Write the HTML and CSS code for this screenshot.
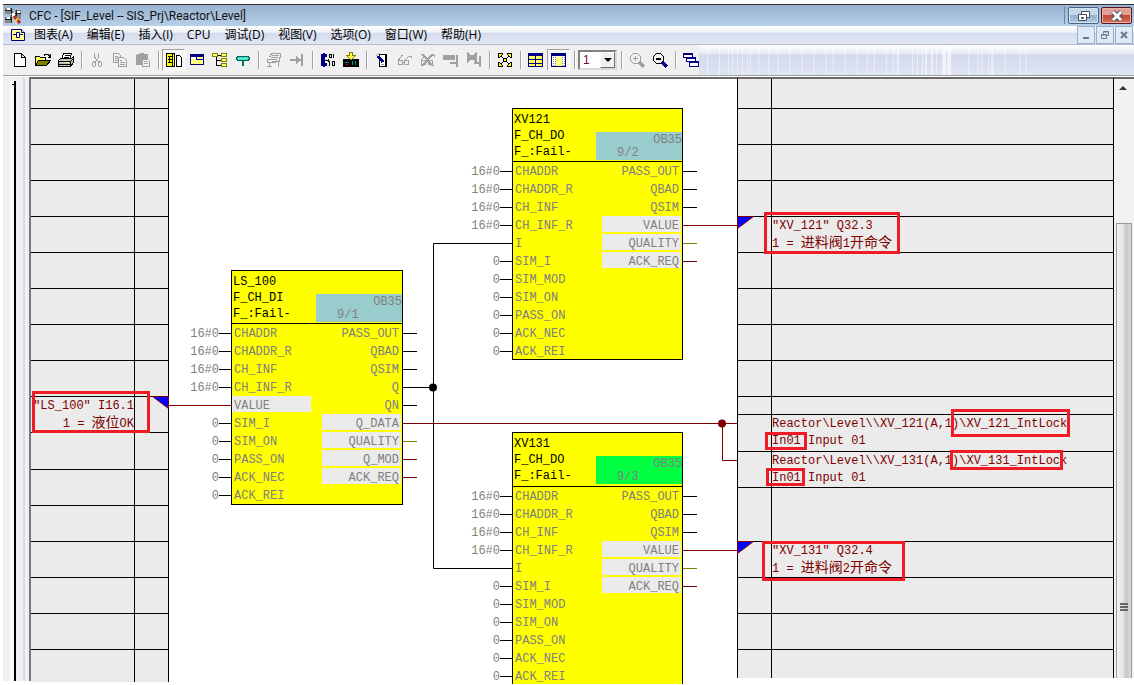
FILE: index.html
```html
<!DOCTYPE html>
<html lang="zh-CN">
<head>
<meta charset="utf-8">
<title>CFC - [SIF_Level -- SIS_Prj\Reactor\Level]</title>
<link rel="stylesheet" href="styles.css">
</head>
<body>
<div class="window">
  <header class="titlebar">
    <svg class="ico" width="18" height="16" viewBox="0 0 18 16"><path fill="#888" d="M0 0h7v6H0zM0 9h7v6H0zM10 2h6v9h-6z"/><path stroke="#222" fill="none" d="M0 2.500h7v3h9M0 11.500h6v-4h5M6.500 0v6M6.500 9v6M11.500 2v6"/><path fill="#fff" d="M2 0h3v2H2zM2 9h3v2H2zM12 3h3v2h-3zM7 5h3v3H7z"/><path stroke="#c22b18" stroke-width="3" d="M9 8l6 7"/><path stroke="#ffd22e" stroke-width="2" d="M13 10l-3 4"/></svg>
    <h1>CFC - [SIF_Level -- SIS_Prj\Reactor\Level]</h1>
    <div class="winbtns">
      <button class="wb" aria-label="还原"><svg width="14" height="12" viewBox="0 0 14 12"><path fill="#fff" stroke="#454c60" d="M4.500 1.500h8v6h-8z"/><path fill="#8fb0d4" stroke="#454c60" d="M7.500 4.500h2v1h-2z"/><path fill="#fff" stroke="#454c60" d="M1.500 4.500h8v6h-8z"/><path fill="#8fb0d4" stroke="#454c60" d="M4.500 7.500h2v1h-2z"/></svg></button>
      <button class="wb close" aria-label="关闭"><svg width="14" height="12" viewBox="0 0 14 12"><path stroke="#454c60" stroke-width="5" d="M3 2l8 8M11 2l-8 8"/><path stroke="#fff" stroke-width="3" d="M3 2l8 8M11 2l-8 8"/></svg></button>
    </div>
  </header>
  <nav class="menubar">
    <svg class="ico" width="14" height="12" viewBox="0 0 14 12"><path fill="#ffff90" stroke="#000080" d="M.5.500h10l3 3v8H.5z"/><path fill="#fff" stroke="#000080" d="M10.500.500v3h3M5.500 3.500h3v5h-3zM2 5.500h3M9 5.500h3"/></svg>
    <button>图表(A)</button><button>编辑(E)</button><button>插入(I)</button><button>CPU</button><button>调试(D)</button><button>视图(V)</button><button>选项(O)</button><button>窗口(W)</button><button>帮助(H)</button>
    <div class="mdibtns">
      <button aria-label="最小化"><svg width="10" height="10" viewBox="0 0 10 10"><path fill="#6b7b8e" d="M2 7h6v2H2z"/></svg></button>
      <button aria-label="还原子窗口"><svg width="10" height="10" viewBox="0 0 10 10"><path fill="none" stroke="#6b7b8e" d="M3.500 3.500v-2h5v4h-2M3 2h6M1.500 4.500h5v4h-5zM1 5h6"/></svg></button>
      <button aria-label="关闭子窗口"><svg width="10" height="10" viewBox="0 0 10 10"><path stroke="#6b7b8e" stroke-width="2" d="M2 2l6 6M8 2l-6 6"/></svg></button>
    </div>
  </nav>
  <div class="toolbar">
    <div class="tools">
      <button aria-label="新建"><svg viewBox="0 0 16 16"><path fill="#fff" stroke="#000" d="M2.500 1.500h7l4 4v9h-11zM9.500 1.500v4h4"/></svg></button>
      <button aria-label="打开"><svg viewBox="0 0 16 16"><path fill="#ffff60" stroke="#000" d="M.5 13.500v-9h4l1 1h5v3"/><path fill="#808000" stroke="#000" d="M.5 13.500l3-5h12l-4 5z"/><path fill="none" stroke="#000" d="M9 3.500l1-1h3l2 2M15.500 2v3h-3"/></svg></button>
      <button aria-label="打印"><svg viewBox="0 0 16 16"><path fill="#fff" stroke="#000" d="M3.500 7.500l2-6h8l-2 6zM6.500 3.500h5M5.500 5.500h5"/><path fill="#c0c0c0" stroke="#000" d="M.5 8.500l2-2h11l2-2v6l-3 4H.5z"/><path stroke="#000" fill="none" d="M.5 9.500h12l3-3M.5 12.500h12v2M12.500 9v4"/><path fill="#ff0" d="M8 10h3v1H8z"/></svg></button>
      <i class="sep"></i>
      <button aria-label="剪切"><svg viewBox="0 0 16 16" fill="none" stroke="#a0a0a0"><path d="M5.500 1v4l5 6M9.500 1v4l-4 6M4.500 9.500h1l1 1v3l-1 1h-1l-1-1v-3zM10.500 9.500h1l1 1v3l-1 1h-1l-1-1v-2z"/></svg></button>
      <button aria-label="复制"><svg viewBox="0 0 16 16" fill="#f0f0f0" stroke="#a0a0a0"><path d="M1.500 1.500h5l2 2v7h-7zM3 4.500h3M3 6.500h3M3 8.500h3"/><path d="M6.500 5.500h5l3 3v6h-8zM8 8.500h2M8 10.500h5M8 12.500h5"/></svg></button>
      <button aria-label="粘贴"><svg viewBox="0 0 16 16" fill="#a0a0a0"><path d="M1 3l1-1h3V1h4v1h3l1 1v10H1z"/><path fill="#f0f0f0" stroke="#a0a0a0" d="M7.500 7.500h5l2 2v5h-7zM9 9.500h3M9 11.500h4M4 4.500h6"/></svg></button>
      <i class="sep"></i>
      <button class="on" aria-label="目录"><svg viewBox="0 0 16 16"><path fill="#ff0" stroke="#000" d="M.5 1.500h8v13h-8z"/><path fill="#fff" stroke="#000" d="M10.500 3.500h3l2 2v9h-5z"/><path stroke="#000" fill="none" d="M6.500 2v12M2 4.500h4M2 7.500h4M3.500 4v7M2 10.500h4M8.500 2v12"/></svg></button>
      <button aria-label="图表窗口"><svg viewBox="0 0 16 16"><path fill="#ffff80" stroke="#000080" d="M1.500 2.500h13v10h-13z"/><path fill="#000080" d="M1 2h14v3H1z"/><path fill="#fff" d="M2 5h5v2H2z"/><path stroke="#000080" d="M7.500 5v2M7 7.500h8"/></svg></button>
      <button aria-label="层次"><svg viewBox="0 0 16 16" fill="#ffff60" stroke="#808000"><path fill="none" stroke="#000" d="M4.500 3v10h6M4.500 8h6M4 3.500h6"/><path d="M.5 1.500h5v3h-5zM9.500 1.500h5v3h-5zM9.500 6.500h5v3h-5zM9.500 11.500h5v3h-5z"/></svg></button>
      <button aria-label="运行顺序"><svg viewBox="0 0 16 16"><path fill="#40e0c0" stroke="#006060" d="M3.500 4.500h9l2 1v2l-2 1h-9l-2-1v-2z"/><path stroke="#008040" stroke-width="2" d="M8 9v5"/><path stroke="#80f0b0" stroke-dasharray="1 1" d="M3 6.500h10"/></svg></button>
      <i class="sep"></i>
      <button aria-label="跳转打印"><svg viewBox="0 0 16 16" fill="none" stroke="#a0a0a0"><path d="M3.500 5.500l2-4h9l-1 8h-8M6 3.500h7M5 5.500h7M1.500 7.500h9l-1 3h-8zM3.500 11v3M1 14.500h5M12.500 10v5"/></svg></button>
      <button aria-label="转到"><svg viewBox="0 0 16 16" fill="#a0a0a0"><path d="M1 7h6V4l4 3h1v2h-1l-4 3V9H1zM12 2h2v12h-2z"/></svg></button>
      <i class="sep"></i>
      <button aria-label="编译"><svg viewBox="0 0 16 16" fill="none" stroke="#000080"><path stroke-width="2" d="M6 5V3H2v10h4v-2M4 1v14"/><path stroke="#000" d="M5 8.500h4M8.500 7v3M9.500 2.500h2v3h-2zM13.500 2v4M9.500 9v5M12.500 9.500h2v4h-2z"/></svg></button>
      <button aria-label="下载"><svg viewBox="0 0 16 16"><path d="M0 7h16v8H0z"/><path fill="#ffff40" stroke="#808000" d="M6.500.500h3v3h3L8 8 3.500 3.500h3z"/><path stroke="#00a080" d="M2 10.500h4M9.500 9v4M12.500 9v4"/><path stroke="#d00" d="M3 12.500h2"/></svg></button>
      <i class="sep"></i>
      <button aria-label="测试模式"><svg viewBox="0 0 16 16"><path fill="#fff" stroke="#000" d="M5.500 2.500h6v12h-6z"/><path fill="#000" d="M11 2h2v13h-2z"/><path stroke="#000080" stroke-width="3" d="M4 4l5 6"/><path stroke="#999" d="M2 4l3-3M7 12.500h3"/></svg></button>
      <button aria-label="监视"><svg viewBox="0 0 16 16" fill="none" stroke="#a0a0a0"><path d="M1.500 8.500h4v4h-4zM7.500 8.500h4v4h-4zM1.500 8l4-5M8 8l4-4h2l1 2M5.500 10.500h2"/></svg></button>
      <button aria-label="取消监视"><svg viewBox="0 0 16 16" fill="none" stroke="#a0a0a0"><path d="M1.500 8.500h4v4h-4zM8.500 8.500h4v4h-4zM1 8l4-4M8 7l4-4h2l1 2"/><path stroke-width="2" d="M2 2l11 12M13 2L2 14"/></svg></button>
      <button aria-label="启用块"><svg viewBox="0 0 16 16" fill="#a0a0a0"><path d="M0 3h12v5H0zM13 3h2v12h-2zM7 10h6v2H7z"/></svg></button>
      <button aria-label="停用块"><svg viewBox="0 0 16 16" fill="#a0a0a0"><path d="M1 3h10v5H1zM13 4h2v11h-2zM8 10h5v2H8z"/><path stroke="#a0a0a0" stroke-width="2" d="M1 1l10 9M11 1L1 10"/></svg></button>
      <i class="sep"></i>
      <button aria-label="适合窗口"><svg viewBox="0 0 16 16"><path stroke="#000" fill="none" d="M3 3l10 10M13 3L3 13"/><path fill="#ff0" stroke="#000" d="M1.500 5.500v-4h4l-1 3zM10.500 1.500h4v4l-3-1zM1.500 10.500v4h4l-1-3zM14.500 10.500v4h-4l1-3zM6.500 6.500h3v3h-3z"/></svg></button>
      <i class="sep"></i>
      <button aria-label="总览"><svg viewBox="0 0 16 16"><path fill="#ffff60" stroke="#000080" d="M.5 1.500h14v13H.5z"/><path fill="#000080" d="M0 1h15v3H0z"/><path stroke="#000080" d="M7.500 4v11M1 7.500h13M1 11.500h13"/></svg></button>
      <button class="on" aria-label="图纸"><svg viewBox="0 0 16 16"><path fill="#fff" stroke="#000080" d="M.5 1.500h14v13H.5z"/><path fill="#000080" d="M0 1h15v3H0z"/><path fill="#ffff80" d="M5 5h6v9H5z"/><path stroke="#808080" stroke-dasharray="1 1" d="M2.500 5v9M4.500 5v9M11.500 5v9M13.500 5v9"/></svg></button>
      <i class="sep"></i>
      <label class="page"><select aria-label="图纸编号"><option>1</option></select><span></span></label>
      <i class="sep"></i>
      <button aria-label="放大"><svg viewBox="0 0 16 16" fill="none" stroke="#a0a0a0"><path d="M4.500 1.500h4l3 3v4l-3 3h-4l-3-3v-4zM4 6.500h5M6.500 4v5"/><path stroke-width="3" d="M10 10l5 5"/></svg></button>
      <button aria-label="缩小"><svg viewBox="0 0 16 16" fill="none" stroke="#000"><path d="M4.500 1.500h4l3 3v4l-3 3h-4l-3-3v-4z"/><path stroke-width="2" d="M4 7h5"/><path stroke="#000080" stroke-width="3" d="M10 10l5 5"/></svg></button>
      <i class="sep"></i>
      <button class="cut" aria-label="层叠"><svg viewBox="0 0 16 16" fill="#fff" stroke="#000080"><path d="M.5 1.500h9v4h-9zM3.500 5.500h9v4h-9zM6.500 9.500h9v5h-9z"/><path stroke-width="2" d="M0 2h10M3 6h10M6 10h10"/></svg></button>
    </div>
    <svg class="streaks" viewBox="0 0 433 30" preserveAspectRatio="none"><path stroke="#fff" stroke-opacity=".5" d="M8.500 0v30M20.500 0v30M29.500 0v30M33.500 0v30M38.500 0v30M43.500 0v30M48.500 0v30M51.500 0v30M59.500 0v30M69.500 0v30M78.500 0v30M90.500 0v30M102.500 0v30M114.500 0v30M126.500 0v30M133.500 0v30M145.500 0v30M157.500 0v30M167.500 0v30M174.500 0v30M186.500 0v30M193.500 0v30M212.500 0v30M217.500 0v30M222.500 0v30M236.500 0v30M268.500 0v30M277.500 0v30M281.500 0v30M288.500 0v30M304.500 0v30M319.500 0v30M325.500 0v30"/><path stroke="#fff" stroke-opacity=".5" stroke-width="2" d="M198 0v30M226 0v30M232 0v30M292 0v30"/><path stroke="#fff" stroke-opacity=".6" stroke-width="4" d="M244 0v30M249 0v30"/></svg>
  </div>

  <main class="work">
    <div class="gutter"><i class="rail"></i><i class="blue"></i></div>
    <section class="sheet left">
      <div class="row first"><p></p></div><div class="row"><p></p></div><div class="row"><p></p></div><div class="row"><p></p></div><div class="row"><p></p></div><div class="row"><p></p></div><div class="row"><p></p></div><div class="row"><p></p></div><div class="row"><p></p></div>
      <div class="row"><p>"LS_100" I16.1<br>1 = <span class="zh">液位</span>OK</p><svg class="flag" width="17" height="13" viewBox="0 0 17 13"><path fill="#00f" stroke="#800000" d="M.5.500h16v12z"/></svg><i class="mark ls"></i></div>
      <div class="row tall"><p></p></div><div class="row"><p></p></div><div class="row"><p></p></div><div class="row"><p></p></div><div class="row"><p></p></div><div class="row"><p></p></div><div class="row last"><p></p></div>
    </section>

    <section class="chart">
      <svg class="wires" width="568" height="606" viewBox="169 79 568 606" fill="none">
        <path stroke="#000" d="M417 387.500h16M512 243.500h-78.500v325H512"/>
        <path stroke="#800000" d="M169 405.500h62M417 423.500h320M722.500 424v36.500H737M697 225.500h40M697 550.500h40"/>
        <circle cx="433" cy="387.500" r="4" fill="#000"/><circle cx="722" cy="423.500" r="4" fill="#800000"/>
      </svg>
      <article class="node ls100">
        <ul class="vals"><li>16#0</li><li>16#0</li><li>16#0</li><li>16#0</li><li class="none"></li><li>0</li><li>0</li><li>0</li><li>0</li><li>0</li></ul>
        <div class="box">
          <header><h2>LS_100<br>F_CH_DI<br>F_:Fail-</h2><div class="task"><span>OB35</span><span class="pos">9/1</span></div></header>
          <div class="io">
            <ul><li>CHADDR</li><li>CHADDR_R</li><li>CH_INF</li><li>CH_INF_R</li><li class="st">VALUE</li><li>SIM_I</li><li>SIM_ON</li><li>PASS_ON</li><li>ACK_NEC</li><li>ACK_REI</li></ul>
            <ul class="out"><li>PASS_OUT</li><li>QBAD</li><li>QSIM</li><li>Q</li><li>QN</li><li class="st">Q_DATA</li><li class="st">QUALITY</li><li class="st">Q_MOD</li><li class="st">ACK_REQ</li></ul>
          </div>
        </div>
        <ul class="pins"><li></li><li></li><li></li><li></li><li></li><li class="red"></li><li class="olive"></li><li class="red"></li><li class="red"></li></ul>
      </article>
      <article class="node xv121">
        <ul class="vals"><li>16#0</li><li>16#0</li><li>16#0</li><li>16#0</li><li class="none"></li><li>0</li><li>0</li><li>0</li><li>0</li><li>0</li><li>0</li></ul>
        <div class="box">
          <header><h2>XV121<br>F_CH_DO<br>F_:Fail-</h2><div class="task"><span>OB35</span><span class="pos">9/2</span></div></header>
          <div class="io">
            <ul><li>CHADDR</li><li>CHADDR_R</li><li>CH_INF</li><li>CH_INF_R</li><li>I</li><li>SIM_I</li><li>SIM_MOD</li><li>SIM_ON</li><li>PASS_ON</li><li>ACK_NEC</li><li>ACK_REI</li></ul>
            <ul class="out"><li>PASS_OUT</li><li>QBAD</li><li>QSIM</li><li class="st">VALUE</li><li class="st">QUALITY</li><li class="st">ACK_REQ</li></ul>
          </div>
        </div>
        <ul class="pins"><li></li><li></li><li></li><li class="red"></li><li class="olive"></li><li class="red"></li></ul>
      </article>
      <article class="node xv131">
        <ul class="vals"><li>16#0</li><li>16#0</li><li>16#0</li><li>16#0</li><li class="none"></li><li>0</li><li>0</li><li>0</li><li>0</li><li>0</li><li>0</li></ul>
        <div class="box">
          <header><h2>XV131<br>F_CH_DO<br>F_:Fail-</h2><div class="task active"><span>OB35</span><span class="pos">9/3</span></div></header>
          <div class="io">
            <ul><li>CHADDR</li><li>CHADDR_R</li><li>CH_INF</li><li>CH_INF_R</li><li>I</li><li>SIM_I</li><li>SIM_MOD</li><li>SIM_ON</li><li>PASS_ON</li><li>ACK_NEC</li><li>ACK_REI</li></ul>
            <ul class="out"><li>PASS_OUT</li><li>QBAD</li><li>QSIM</li><li class="st">VALUE</li><li class="st">QUALITY</li><li class="st">ACK_REQ</li></ul>
          </div>
        </div>
        <ul class="pins"><li></li><li></li><li></li><li class="red"></li><li class="olive"></li><li class="red"></li></ul>
      </article>
    </section>

    <section class="sheet right">
      <div class="row first"><p></p></div><div class="row"><p></p></div><div class="row"><p></p></div><div class="row"><p></p></div>
      <div class="row"><svg class="flag" width="17" height="13" viewBox="0 0 17 13"><path fill="#00f" stroke="#800000" d="M.5.500h16l-16 12z"/></svg><p>"XV_121" Q32.3<br>1 = <span class="zh">进料阀</span>1<span class="zh">开命令</span></p><i class="mark q323"></i></div>
      <div class="row"><p></p></div><div class="row"><p></p></div><div class="row"><p></p></div><div class="row"><p></p></div>
      <div class="row half"><p></p></div>
      <div class="row tall"><p>Reactor\Level\\XV_121(A,1)\XV_121_IntLock<br>In01 Input 01</p><i class="mark lock1"></i><i class="mark in1"></i></div>
      <div class="row"><p>Reactor\Level\\XV_131(A,1)\XV_131_IntLock<br>In01 Input 01</p><i class="mark lock2"></i><i class="mark in2"></i></div>
      <div class="row wide"><p></p></div>
      <div class="row"><svg class="flag" width="17" height="13" viewBox="0 0 17 13"><path fill="#00f" stroke="#800000" d="M.5.500h16l-16 12z"/></svg><p>"XV_131" Q32.4<br>1 = <span class="zh">进料阀</span>2<span class="zh">开命令</span></p><i class="mark q324"></i></div>
      <div class="row"><p></p></div><div class="row"><p></p></div><div class="row last"><p></p></div>
    </section>
    <div class="scroll">
      <svg width="8" height="4" viewBox="0 0 8 4"><path fill="#333" d="M0 4l4-4 4 4z"/></svg>
      <div class="thumb"><i></i><i></i><i></i></div>
    </div>
  </main>
</div>
</body>
</html>
```
FILE: styles.css
```css
* { box-sizing: border-box; }
body { margin: 0; background: #fff; font: 12px "Liberation Sans", "Noto Sans CJK SC", sans-serif; }
ul, h1, h2, p { margin: 0; padding: 0; font-weight: normal; list-style: none; }
button { margin: 0; padding: 0; border: 0; background: none; color: #000; font: inherit; display: flex; align-items: center; justify-content: center; }
svg { display: block; flex: none; }
.window { padding: 4px 0 0 3px; overflow: hidden; }

.titlebar { display: flex; align-items: center; height: 22px; border-top: 1px solid #333; background: linear-gradient(#98b3d0, #b7cfe8); padding: 0 2px; }
.titlebar .ico { width: 18px; }
.titlebar h1 { flex: 1; padding-left: 6px; font: 12px/20px Roboto, sans-serif; color: #111; }
.winbtns { display: flex; gap: 2px; border-left: 1px solid #6d86a5; padding-left: 3px; }
.wb { width: 31px; height: 17px; border: 1px solid #4c6480; border-radius: 2px; background: linear-gradient(#c5d7ea 45%, #94b1d0 50%, #b4cce4); box-shadow: inset 0 0 0 1px #d6e4f2; }
.wb.close { border-color: #5a1420; background: linear-gradient(#e0a095 45%, #bf4630 50%, #d5735a); box-shadow: inset 0 0 0 1px #e9b5a8; }

.menubar { display: flex; align-items: center; height: 19px; background: linear-gradient(#fff, #eef1f8 35%, #d4dbed 40%, #e1e6f4); border-bottom: 1px solid #b6bccc; padding-left: 8px; gap: 14px; }
.menubar .ico { margin-right: -5px; }
.menubar > button { font: 12px/18px "Open Sans", "Noto Sans CJK SC", sans-serif; }
.mdibtns { display: flex; gap: 1px; margin-left: auto; padding-right: 1px; }
.mdibtns button { width: 18px; height: 18px; border: 1px solid #9aafc8; background: #dfeaf7; }

.toolbar { display: flex; height: 31px; border-bottom: 1px solid #a0a0a0; background: #f0f0f0; }
.tools { display: flex; align-items: center; padding-left: 5px; flex: none; }
.tools button { width: 23px; height: 22px; }
.tools button svg { width: 16px; height: 16px; shape-rendering: crispEdges; }
.tools button.on { border: 1px solid; border-color: #a0a0a0 #fff #fff #a0a0a0; background: #f6f6f6; }
.tools button.cut { width: 20px; overflow: hidden; justify-content: flex-start; padding-left: 4px; }
.sep { width: 8px; height: 18px; background: linear-gradient(90deg, transparent 4px, #a0a0a0 4px 5px, #fff 5px 6px, transparent 6px); }
.page { position: relative; width: 39px; height: 20px; }
.page select { appearance: none; width: 100%; height: 100%; margin: 0; padding: 0 0 0 3px; border: 2px solid; border-color: #808080 #d8d8d8 #d8d8d8 #808080; border-radius: 0; background: #fff; color: #800040; font: 12px "Liberation Sans", sans-serif; }
.page span { position: absolute; right: 2px; top: 2px; width: 15px; height: 16px; background: #f0f0f0; border: 1px solid; border-color: #fff #707070 #707070 #fff; pointer-events: none; }
.page span::after { content: ""; position: absolute; left: 3px; top: 5px; border: 4px solid transparent; border-top-color: #000; border-bottom: 0; }
.streaks { flex: 1; width: 0; height: 30px; background: linear-gradient(#fff, #e8ecf6 25%, #d3daed 35%, #dfe4f3); }

.work { display: flex; align-items: flex-start; padding-top: 1px; font: 12px/18px "Liberation Mono", "Noto Sans CJK SC", monospace; }
.gutter { flex: none; width: 28px; height: 604px; background: #f0f0f0; border-right: 2px solid #777; display: flex; }
.rail { width: 6px; margin: 4px 0 0 7px; border-left: 2px solid #fff; border-right: 2px solid #000; background: #f8f8f8; }
.rail::before { content: ""; display: block; width: 2px; height: 1px; margin-top: 3px; background: #000; }
.blue { width: 2px; margin-left: 7px; background: #d3daed; }
.sheet { border-top: 2px solid #696969; background: #ebebeb; }
.left { flex: none; width: 138px; border-right: 1px solid #000; }
.right { flex: 1; min-width: 0; border-left: 1px solid #000; border-right: 1px solid #000; }
.row { position: relative; display: grid; height: 36px; border-bottom: 1px solid #000; color: #800000; white-space: nowrap; line-height: 17px; }
.left .row { grid-template-columns: 104px 1fr; }
.left p { border-right: 1px solid #000; text-align: right; padding: 1px 0 0; }
.right .row { grid-template-columns: 34px 1fr; }
.right p { grid-column: 2; border-left: 1px solid #000; padding-top: 1px; margin-left: -1px; }
.row.first { height: 30px; }
.row.tall { height: 37px; }
.row.half { height: 18px; }
.row.wide { height: 54px; }
.row.last { height: 32px; border-bottom: 0; }
.right .row.last { height: 28px; }
.zh { font-size: 14px; }
.flag { position: absolute; top: -1px; }
.left .flag { right: -1px; }
.right .flag { left: -1px; }
.mark { position: absolute; z-index: 2; border: 3px solid #ee1c25; }
.ls { left: 1px; top: -6px; width: 118px; height: 42px; }
.q323 { left: 26px; top: -5px; width: 136px; height: 42px; }
.lock1 { left: 213px; top: -6px; width: 119px; height: 28px; }
.in1 { left: 27px; top: 17px; width: 42px; height: 18px; }
.lock2 { left: 212px; top: -2px; width: 113px; height: 20px; }
.in2 { left: 28px; top: 16px; width: 39px; height: 18px; }
.q324 { left: 24px; top: -1px; width: 143px; height: 40px; }

.chart { position: relative; flex: none; width: 568px; height: 607px; border-top: 2px solid #696969; }
.wires { position: absolute; left: 0; top: 0; }
.node { position: absolute; display: flex; color: #808080; }
.ls100 { left: 20px; top: 191px; }
.xv121 { left: 301px; top: 29px; }
.xv131 { left: 301px; top: 353px; }
.vals { width: 42px; padding-top: 54px; }
.vals li { height: 18px; display: flex; justify-content: flex-end; line-height: 20px; }
.vals li::after { content: ""; width: 12px; height: 1px; margin-top: 9px; background: #000; }
.vals .none::after { display: none; }
.box { width: 172px; border: 1px solid #000; background: #ff0; }
.xv121 .box, .xv131 .box { width: 171px; }
.box header { display: flex; justify-content: space-between; height: 53px; border-bottom: 1px solid #000; padding-left: 1px; }
.xv131 header { height: 54px; }
.xv131 .vals, .xv131 .pins { padding-top: 55px; }
.box h2 { padding-top: 3px; font: inherit; line-height: 16px; color: #000; white-space: nowrap; }
.task { width: 86px; height: 28px; margin-top: 23px; background: #9cc; display: flex; flex-direction: column; line-height: 13px; padding-top: 2px; text-align: right; }
.task.active { background: #00ff40; }
.task .pos { text-align: left; padding-left: 21px; }
.io { display: flex; justify-content: space-between; padding-right: 1px; }
.xv121 .io, .xv131 .io { height: 197px; }
.io ul { width: 79px; }
.io li { height: 18px; line-height: 21px; padding: 0 2px; white-space: nowrap; }
.io .out { text-align: right; }
.io .st { background: linear-gradient(#ebebeb, #ebebeb) 0 0 / 100% 16px no-repeat; }
.pins { width: 14px; padding-top: 54px; }
.pins li { height: 18px; padding-top: 9px; }
.pins li::after { content: ""; display: block; height: 1px; background: #000; }
.pins .red::after { background: #800000; }
.pins .olive::after { background: #808000; }

.scroll { flex: none; width: 20px; height: 601px; display: flex; flex-direction: column; align-items: center; padding-top: 7px; border-top: 2px solid #696969; background: #f2f2f2; }
.scroll > svg { margin-right: 2px; }
.thumb { display: flex; flex-direction: column; justify-content: center; align-items: center; gap: 1px; width: 16px; flex: 1; margin: 133px 1px 0 0; padding-top: 312px; border: 1px solid #999; border-bottom: 0; background: linear-gradient(90deg, #f5f5f5, #e2e2e4 45%, #c4c5ca 65%, #dcdcde); }
.thumb i { width: 8px; height: 2px; background: #666; }
```
